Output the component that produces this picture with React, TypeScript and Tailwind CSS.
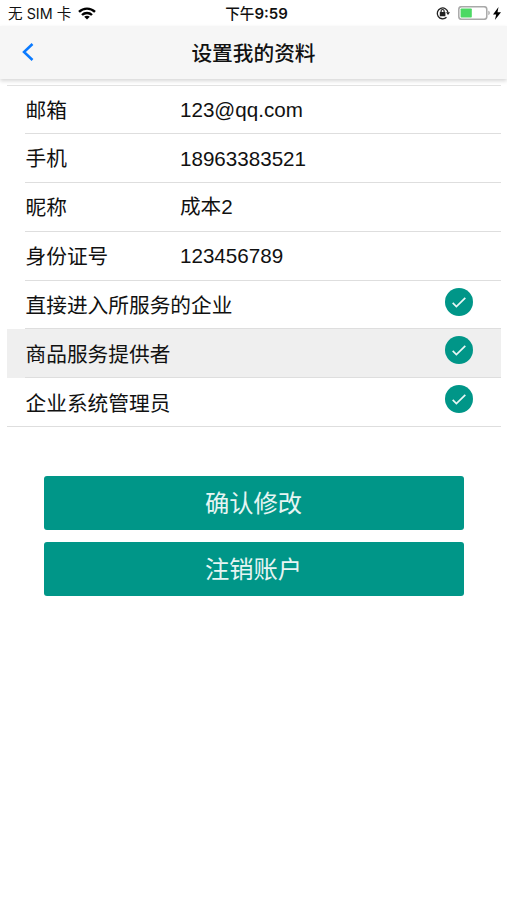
interface Field {
  label: string
  value: string
}

interface Option {
  label: string
  active?: boolean
}

const FIELDS: Field[] = [
  { label: '邮箱', value: '123@qq.com' },
  { label: '手机', value: '18963383521' },
  { label: '昵称', value: '成本2' },
  { label: '身份证号', value: '123456789' },
]

const OPTIONS: Option[] = [
  { label: '直接进入所服务的企业' },
  { label: '商品服务提供者', active: true },
  { label: '企业系统管理员' },
]

const ACTIONS = ['确认修改', '注销账户']

function WifiIcon() {
  return (
    <svg width="18" height="13" viewBox="0 0 18 13" fill="none" stroke="#000" strokeWidth="2.4">
      <path d="M1 4.8C5.5.5 12.5.5 17 4.8" />
      <path d="M4 8C6.8 5.3 11.2 5.3 14 8" />
      <path d="M9 12.4L6.2 9.7C7.8 8.3 10.2 8.3 11.8 9.7Z" fill="#000" stroke="none" />
    </svg>
  )
}

function RotationLockIcon() {
  return (
    <svg width="14" height="14" viewBox="0 0 14 14" fill="none" stroke="#222">
      <path d="M10.5 11.2A5.4 5.4 0 1 1 12 6.5" strokeWidth="1.3" />
      <path d="M10 6.2h4l-2 2.7z" fill="#222" stroke="none" />
      <rect x="3.8" y="6" width="5.6" height="4.2" rx=".5" fill="#222" stroke="none" />
      <path d="M5.1 6.3V5a1.500 1.500 0 0 1 3 0v1.300" strokeWidth="1.2" />
    </svg>
  )
}

function BatteryIcon() {
  return (
    <svg width="33" height="14" viewBox="0 0 33 14" fill="none">
      <rect x=".8" y=".7" width="28" height="12.6" rx="2.8" stroke="#a9a9a9" strokeWidth="1.5" />
      <rect x="2.6" y="2.4" width="11.2" height="9.2" rx=".8" fill="#4cd964" />
      <path d="M30.3 4.8c2 .5 2 3.9 0 4.4z" fill="#a9a9a9" />
    </svg>
  )
}

function BoltIcon() {
  return (
    <svg width="8" height="13" viewBox="0 0 8 13" fill="#000">
      <path d="M5.5 0L0 7.4h3.2L1.9 13 8 5.3H4.5z" />
    </svg>
  )
}

function CheckBadge() {
  return (
    <svg width="28" height="28" viewBox="0 0 28 28" fill="none">
      <circle cx="14" cy="14" r="14" fill="#009688" />
      <path d="M7.7 14.8L11.4 18.5L20.3 9.8" stroke="#e8f7f5" strokeWidth="1.7" />
    </svg>
  )
}

function StatusBar() {
  return (
    <div className="grid h-[26px] grid-cols-3 items-center pt-0.5 text-[14.6px]">
      <div className="flex items-center gap-[7px] whitespace-nowrap pl-2">
        <span>无 <span className="font-['Inter'] text-[14.3px]">SIM</span> 卡</span>
        <span className="-mt-0.5 flex"><WifiIcon /></span>
      </div>
      <span className="pl-1.5 text-center font-medium">
        下午<span className="font-['Inter'] text-[15px] font-semibold">9:59</span>
      </span>
      <div className="-mt-0.5 flex items-center justify-end pr-1.5">
        <RotationLockIcon />
        <span className="ml-2 flex"><BatteryIcon /></span>
        <span className="ml-0.5 flex"><BoltIcon /></span>
      </div>
    </div>
  )
}

export default function App() {
  return (
    <div className="h-[900px] w-[507px] overflow-hidden bg-white font-['Liberation_Sans','Noto_Sans_CJK_SC',sans-serif] text-[20.7px] leading-none text-[#111]">
      <StatusBar />

      <header className="relative grid h-[53px] grid-cols-[60px_1fr_60px] items-center bg-[#f6f6f6] shadow-[0_2px_4px_rgba(0,0,0,0.16)]">
        <button className="-mt-0.5 flex pl-[22px]" aria-label="返回">
          <svg width="12" height="18" viewBox="0 0 12 18" fill="none" stroke="#0a7aff" strokeWidth="2.5">
            <path d="M10.5 1L2 9l8.5 8" />
          </svg>
        </button>
        <h1 className="pt-[3px] text-center font-medium">设置我的资料</h1>
      </header>

      <main className="ml-[7px] mr-1.5 mt-1.5">
        {FIELDS.map(f => (
          <div key={f.label} className="h-[48.9px] border-[#e2e2e2] pl-[18px] first:border-t">
            <div className="flex h-full items-center border-b border-[#dedede] pl-[0.5px] pt-0.5">
              <span className="w-[154.5px] pt-px">{f.label}</span>
              <span className="text-[20.6px]">{f.value}</span>
            </div>
          </div>
        ))}
        {OPTIONS.map((o, i) => {
          const last = i === OPTIONS.length - 1
          return (
            <div
              key={o.label}
              className={`h-[48.9px] pl-[18px] ${o.active ? 'bg-[#efefef]' : ''} ${last ? 'border-b border-[#dedede]' : ''}`}
            >
              <div
                className={`flex h-full items-center justify-between pl-[0.5px] pr-7 ${last ? '' : 'border-b border-[#dedede]'}`}
              >
                <span className="pt-1">{o.label}</span>
                <span className="mb-1.5 flex"><CheckBadge /></span>
              </div>
            </div>
          )
        })}

        <div className="mx-[37px] mt-[48.7px] flex flex-col gap-3">
          {ACTIONS.map(a => (
            <button key={a} className="h-[54px] rounded-[3px] bg-[#009688] pr-px pt-0.5 text-[24.3px] text-[#e6f5f3]">
              {a}
            </button>
          ))}
        </div>
      </main>
    </div>
  )
}
